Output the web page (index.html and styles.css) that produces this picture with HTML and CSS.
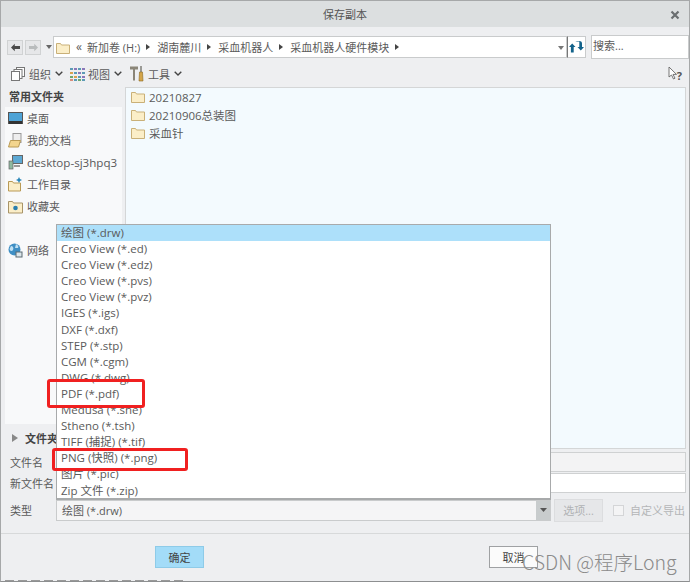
FILE: index.html
```html
<!DOCTYPE html>
<html lang="zh-CN">
<head>
<meta charset="utf-8">
<title>保存副本</title>
<link rel="stylesheet" href="styles.css">
</head>
<body>
<div class="window">
  <header class="titlebar">
    <span class="title">保存副本</span>
    <svg class="close" width="10" height="10" viewBox="0 0 10 10"><path d="M1.5 1.5l7 7M8.5 1.5l-7 7" stroke="#6a6e70" stroke-width="2.2"/></svg>
  </header>

  <div class="pathrow">
    <div class="navbtns">
      <button class="nav"><svg width="14" height="12" viewBox="0 0 14 12"><path d="M1 6l5-5v3h7v4H6v3z" fill="#4a4a4a"/></svg></button>
      <button class="nav"><svg width="14" height="12" viewBox="0 0 14 12"><path d="M13 6L8 1v3H1v4h7v3z" fill="#b9bcbd"/></svg></button>
      <svg class="navdrop" width="6" height="4" viewBox="0 0 6 4"><path d="M0 0h6L3 4z" fill="#666"/></svg>
    </div>
    <div class="pathbox">
      <svg class="folder" width="14" height="13" viewBox="0 0 14 13"><path d="M.5 2.500h4l1 1.500h8v8.500h-13z" fill="#fbeec8" stroke="#c9b078"/></svg>
      <span class="chev">«</span>
      <span class="crumb">新加卷 (H:)</span><i class="tri"></i>
      <span class="crumb">湖南麓川</span><i class="tri"></i>
      <span class="crumb">采血机器人</span><i class="tri"></i>
      <span class="crumb">采血机器人硬件模块</span><i class="tri"></i>
      <svg class="pathdrop" width="6" height="4" viewBox="0 0 6 4"><path d="M0 0h6L3 4z" fill="#777"/></svg>
    </div>
    <div class="refresh">
      <svg width="15" height="12" viewBox="0 0 15 12"><path d="M0 6l3.200-3.500L6.500 6H4.700v5.500H1.900V6z" fill="#12628a"/><path d="M15 6l-3.200 3.500L8.500 6h1.800V.5h-4c2-1 5-.5 5.800 0 .4.300.9 1 .9 2V6z" fill="#12628a"/></svg>
    </div>
    <div class="search">搜索...</div>
  </div>

  <div class="toolbar">
    <span class="tool">
      <svg width="16" height="16" viewBox="0 0 16 16"><g fill="#fff" stroke="#777"><rect x="6.500" y="1.500" width="8" height="9"/><rect x="4" y="3.500" width="8" height="9"/><rect x="1.500" y="5.500" width="8" height="9"/></g></svg>
      组织 <svg class="caret" width="8" height="5" viewBox="0 0 8 5"><path d="M.7.700L4 4 7.300.700" fill="none" stroke="#444" stroke-width="1.400"/></svg>
    </span>
    <span class="tool">
      <svg width="15" height="14" viewBox="0 0 15 14"><g fill="#5b9bb5"><rect x="0" y="1" width="3" height="2"/><rect x="0" y="5" width="3" height="2" fill="#d9a24f"/><rect x="0" y="9" width="3" height="2" fill="#6da86d"/><rect x="0" y="12" width="3" height="2" fill="#d98c7a"/><rect x="4" y="1" width="3" height="2" fill="#8a78b8"/><rect x="4" y="5" width="3" height="2"/><rect x="4" y="9" width="3" height="2" fill="#d9a24f"/><rect x="4" y="12" width="3" height="2"/><rect x="8" y="1" width="3" height="2"/><rect x="8" y="5" width="3" height="2" fill="#8a78b8"/><rect x="8" y="9" width="3" height="2"/><rect x="8" y="12" width="3" height="2" fill="#6da86d"/><rect x="12" y="1" width="3" height="2" fill="#8a78b8"/><rect x="12" y="5" width="3" height="2"/><rect x="12" y="9" width="3" height="2" fill="#8a78b8"/><rect x="12" y="12" width="3" height="2"/></g></svg>
      视图 <svg class="caret" width="8" height="5" viewBox="0 0 8 5"><path d="M.7.700L4 4 7.300.700" fill="none" stroke="#444" stroke-width="1.400"/></svg>
    </span>
    <span class="tool">
      <svg width="16" height="17" viewBox="0 0 16 17"><path d="M1 1.500h8v3H6v11H4v-11H1z" fill="#8a8578"/><path d="M11 1h2v6h-2z" fill="#9a9a96"/><path d="M10.500 7h3l.5 9h-4z" fill="#d4a54a" stroke="#8c6a22" stroke-width=".6"/></svg>
      工具 <svg class="caret" width="8" height="5" viewBox="0 0 8 5"><path d="M.7.700L4 4 7.300.700" fill="none" stroke="#444" stroke-width="1.400"/></svg>
    </span>
    <span class="help">
      <svg width="10" height="14" viewBox="0 0 10 14"><path d="M1 1v10l2.500-2 2 4 1.500-.8-2-3.800h3.500z" fill="#fff" stroke="#666" stroke-width=".9"/></svg><b>?</b>
    </span>
  </div>

  <div class="main">
    <aside class="side">
      <h2 class="sidehead">常用文件夹</h2>
      <ul class="places">
        <li class="place">
          <svg width="15" height="13" viewBox="0 0 15 13"><rect x=".5" y=".5" width="14" height="11" fill="#4ea3d6" stroke="#555"/><rect x="1" y="9" width="13" height="3" fill="#333"/></svg>桌面
        </li>
        <li class="place">
          <svg width="15" height="15" viewBox="0 0 15 15"><rect x="5" y=".5" width="8" height="9" fill="#eee" stroke="#999"/><path d="M2.500 7.500h10l-2 6.500h-10z" fill="#f3d58e" stroke="#b99a55"/></svg>我的文档
        </li>
        <li class="place place-latin">
          <svg width="15" height="15" viewBox="0 0 15 15"><rect x="4.500" y=".5" width="10" height="8" fill="#5da9d4" stroke="#666"/><rect x="1" y="6" width="4" height="8" fill="#8fb9a0" stroke="#666" stroke-width=".7"/><rect x="6" y="10" width="6" height="2" fill="#999"/></svg>desktop-sj3hpq3
        </li>
        <li class="place">
          <svg width="15" height="15" viewBox="0 0 15 15"><path d="M.5 4.500h4l1 1.500h7v8h-12z" fill="#fbeec8" stroke="#b99a55"/><path d="M11 0l1 2 2 1-2 1-1 2-1-2-2-1 2-1z" fill="#2a86b8"/></svg>工作目录
        </li>
        <li class="place">
          <svg width="15" height="15" viewBox="0 0 15 15"><path d="M.5 2.500h4l1 1.500h9v10h-14z" fill="#fbeec8" stroke="#a89468"/><circle cx="7.500" cy="9" r="2.300" fill="#2a7fae"/></svg>收藏夹
        </li>
        <li class="place place-net">
          <svg width="15" height="15" viewBox="0 0 15 15"><circle cx="6.500" cy="6.500" r="6" fill="#3f8fc4"/><path d="M3 3c2 0 3 2 2 4S2 8 1.500 6zM8 1c2 1 3 3 2 4H7z" fill="#bfe0f2"/><rect x="8" y="9" width="6" height="5" fill="#dce6ea" stroke="#5a6a72"/></svg>网络
        </li>
      </ul>
      <div class="folderrow"><i class="tri tri-grey"></i><b>文件夹</b></div>
    </aside>
    <section class="files">
      <div class="file"><svg class="folder" width="14" height="12" viewBox="0 0 14 12"><path d="M.5 1.500h4l1 1.500h8v8.500h-13z" fill="#fbeec8" stroke="#c9b078"/></svg>20210827</div>
      <div class="file"><svg class="folder" width="14" height="12" viewBox="0 0 14 12"><path d="M.5 1.500h4l1 1.500h8v8.500h-13z" fill="#fbeec8" stroke="#c9b078"/></svg>20210906总装图</div>
      <div class="file"><svg class="folder" width="14" height="12" viewBox="0 0 14 12"><path d="M.5 1.500h4l1 1.500h8v8.500h-13z" fill="#fbeec8" stroke="#c9b078"/></svg>采血针</div>
    </section>
  </div>

  <div class="form">
    <div class="formrow namerow"><label class="lbl">文件名</label><div class="field field-grey"></div></div>
    <div class="formrow namerow"><label class="lbl">新文件名</label><div class="field"></div></div>
    <div class="formrow typerow">
      <label class="lbl">类型</label>
      <div class="select"><span>绘图 (*.drw)</span><span class="selbtn"><svg width="7" height="4" viewBox="0 0 7 4"><path d="M0 0h7L3.500 4z" fill="#555"/></svg></span></div>
      <button class="opts">选项...</button>
      <span class="check"><i class="box"></i>自定义导出</span>
    </div>
  </div>

  <footer class="footer">
    <button class="btn btn-primary">确定</button>
    <button class="btn btn-cancel">取消</button>
  </footer>

  <ul class="dropdown">
    <li class="opt opt-on">绘图 (*.drw)</li>
    <li class="opt">Creo View (*.ed)</li>
    <li class="opt">Creo View (*.edz)</li>
    <li class="opt">Creo View (*.pvs)</li>
    <li class="opt">Creo View (*.pvz)</li>
    <li class="opt">IGES (*.igs)</li>
    <li class="opt">DXF (*.dxf)</li>
    <li class="opt">STEP (*.stp)</li>
    <li class="opt">CGM (*.cgm)</li>
    <li class="opt">DWG (*.dwg)</li>
    <li class="opt">PDF (*.pdf)</li>
    <li class="opt">Medusa (*.she)</li>
    <li class="opt">Stheno (*.tsh)</li>
    <li class="opt">TIFF (捕捉) (*.tif)</li>
    <li class="opt">PNG (快照) (*.png)</li>
    <li class="opt">图片 (*.pic)</li>
    <li class="opt">Zip 文件 (*.zip)</li>
  </ul>
  <div class="mark mark-pdf"></div>
  <div class="mark mark-png"></div>
  <div class="remnant"></div>
  <div class="watermark">CSDN @程序Long</div>
</div>
</body>
</html>
```

FILE: styles.css
```css
* { box-sizing: border-box; }
html, body { margin: 0; padding: 0; background: #fff; }
body { width: 692px; height: 583px; overflow: hidden; font-family: "Open Sans", "Noto Sans CJK SC", sans-serif; font-size: 11px; color: #5a5a5a; }
ul { list-style: none; margin: 0; padding: 0; }
button { font: inherit; color: inherit; }

.window { position: relative; width: 690px; height: 582px; margin-left: 0; background: #eeeff1; border: 1px solid #a6a8a9; border-bottom-color: #8d8f90; display: flex; flex-direction: column; }

.titlebar { height: 26px; flex: none; background: #dcdfe0; display: flex; align-items: center; justify-content: center; position: relative; }
.title { font-size: 11px; color: #555; }
.close { position: absolute; right: 9px; top: 9px; }

.pathrow { display: flex; align-items: center; height: 26px; margin-top: 7px; padding: 0 0 0 6px; flex: none; }
.navbtns { display: flex; align-items: center; gap: 2px; width: 46px; flex: none; }
.nav { width: 16px; height: 15px; padding: 0; border: 1px solid #d0d2d3; background: #e6e7e9; display: flex; align-items: center; justify-content: center; }
.nav svg { width: 11px; height: 9px; }
.navdrop { margin-left: 3px; }
.pathbox { width: 514px; height: 22px; background: #fff; border: 1px solid #c9cbcc; display: flex; align-items: center; padding: 0 0 0 2px; position: relative; flex: none; }
.pathbox .folder { margin-right: 6px; }
.chev { font-size: 12px; margin-right: 5px; line-height: 1; }
.crumb { white-space: nowrap; }
.tri { display: inline-block; width: 0; height: 0; border-left: 4px solid #444; border-top: 3px solid transparent; border-bottom: 3px solid transparent; margin: 0 7px 0 6px; flex: none; }
.pathdrop { position: absolute; right: 2px; top: 9px; }
.refresh { width: 19px; height: 22px; border: 1px solid #c9cbcc; border-left: 1px solid #777; background: #fff; display: flex; align-items: center; justify-content: center; flex: none; }
.search { width: 98px; height: 24px; margin-left: 5px; background: #fff; border: 1px solid #c9cbcc; padding-left: 1px; line-height: 20px; flex: none; }

.toolbar { height: 23px; flex: none; display: flex; align-items: center; padding: 0 0 0 9px; gap: 7px; margin-top: 2px; position: relative; }
.tool { display: inline-flex; align-items: center; gap: 3px; }
.caret { margin-left: 1px; }
.help { position: absolute; right: 7px; top: 3px; display: flex; align-items: center; }
.help b { font-size: 11px; color: #555; margin-left: -1px; margin-top: 5px; line-height: 1; }

.main { flex: none; height: 364px; display: flex; padding: 2px 3px 0 3px; gap: 3px; }
.side { width: 118px; flex: none; }
.sidehead { margin: 0; font-size: 11px; font-weight: 700; height: 20px; line-height: 20px; padding-left: 5px; color: #444; }
.places { background: #f8f9fa; height: 317px; margin-left: 1px; }
.place { height: 22px; display: flex; align-items: center; gap: 4px; padding-left: 3px; white-space: nowrap; }
.place-latin { font-size: 11.6px; }
.place-net { margin-top: 22px; }
.folderrow { margin-top: 3px; height: 22px; display: flex; align-items: center; white-space: nowrap; }
.folderrow .tri-grey { border-left: 6px solid #888; border-top: 4px solid transparent; border-bottom: 4px solid transparent; margin: 0 7px 0 8px; }
.folderrow b { color: #444; }
.files { flex: 1; border: 1px solid #d4d6d7; background: #f3fafe; padding: 0 0 0 5px; font-size: 11.5px; }
.file { height: 18px; display: flex; align-items: center; gap: 4px; }

.form { flex: none; padding: 2px 3px 0 9px; display: flex; flex-direction: column; }
.formrow { display: flex; align-items: center; }
.namerow { height: 21px; }
.lbl { width: 46px; flex: none; }
.field { flex: 1; height: 20px; background: #fff; border: 1px solid #cfd1d2; }
.field-grey { background: #f3f3f4; }
.typerow { height: 24px; margin-top: 5px; }
.select { width: 495px; height: 21px; background: #f5f5f6; border: 1px solid #c9cbcc; display: flex; align-items: center; justify-content: space-between; padding-left: 5px; flex: none; }
.selbtn { width: 14px; height: 19px; background: #c8cccd; display: flex; align-items: center; justify-content: center; }
.opts { width: 49px; height: 23px; margin-left: 3px; background: #e6e7e9; border: 1px solid #dcdddf; color: #b0b2b4; padding: 0; }
.check { display: inline-flex; align-items: center; gap: 6px; color: #b4b6b8; margin-left: 10px; white-space: nowrap; }
.box { width: 11px; height: 11px; background: #f4f4f5; border: 1px solid #d4d5d7; }

.footer { margin-top: 11px; border-top: 1px solid #d7d9da; flex: 1; display: flex; align-items: flex-start; justify-content: space-between; padding: 12px 151px 0 154px; }
.btn { width: 49px; height: 22px; padding: 0; font-size: 11px; }
.btn-primary { background: #a3dcf8; border: 1px solid #8ecbe8; color: #444; }
.btn-cancel { background: #fbfbfb; border: 1px solid #9fa1a3; color: #444; }

.dropdown { position: absolute; left: 55px; top: 223px; width: 495px; height: 276px; background: #fff; border: 1px solid #a8aaab; border-bottom-width: 2px; }
.opt { height: 16.1px; line-height: 15px; padding-left: 4px; white-space: nowrap; font-size: 11.5px; }
.opt-on { background: #ade0fa; }

.mark { position: absolute; border: 3px solid #f02020; border-radius: 3px; }
.mark-pdf { left: 46px; top: 378px; width: 98px; height: 29px; }
.mark-png { left: 51px; top: 447px; width: 136px; height: 23px; }
.remnant { position: absolute; left: 4px; bottom: 0; width: 180px; height: 1px; background: repeating-linear-gradient(90deg, #999 0 9px, transparent 9px 13px); }
.watermark { position: absolute; left: 521px; top: 546px; font-size: 19.5px; line-height: 30px; font-family: "Noto Sans CJK SC", sans-serif; font-weight: 300; color: #8a8a8a; white-space: nowrap; }
```
